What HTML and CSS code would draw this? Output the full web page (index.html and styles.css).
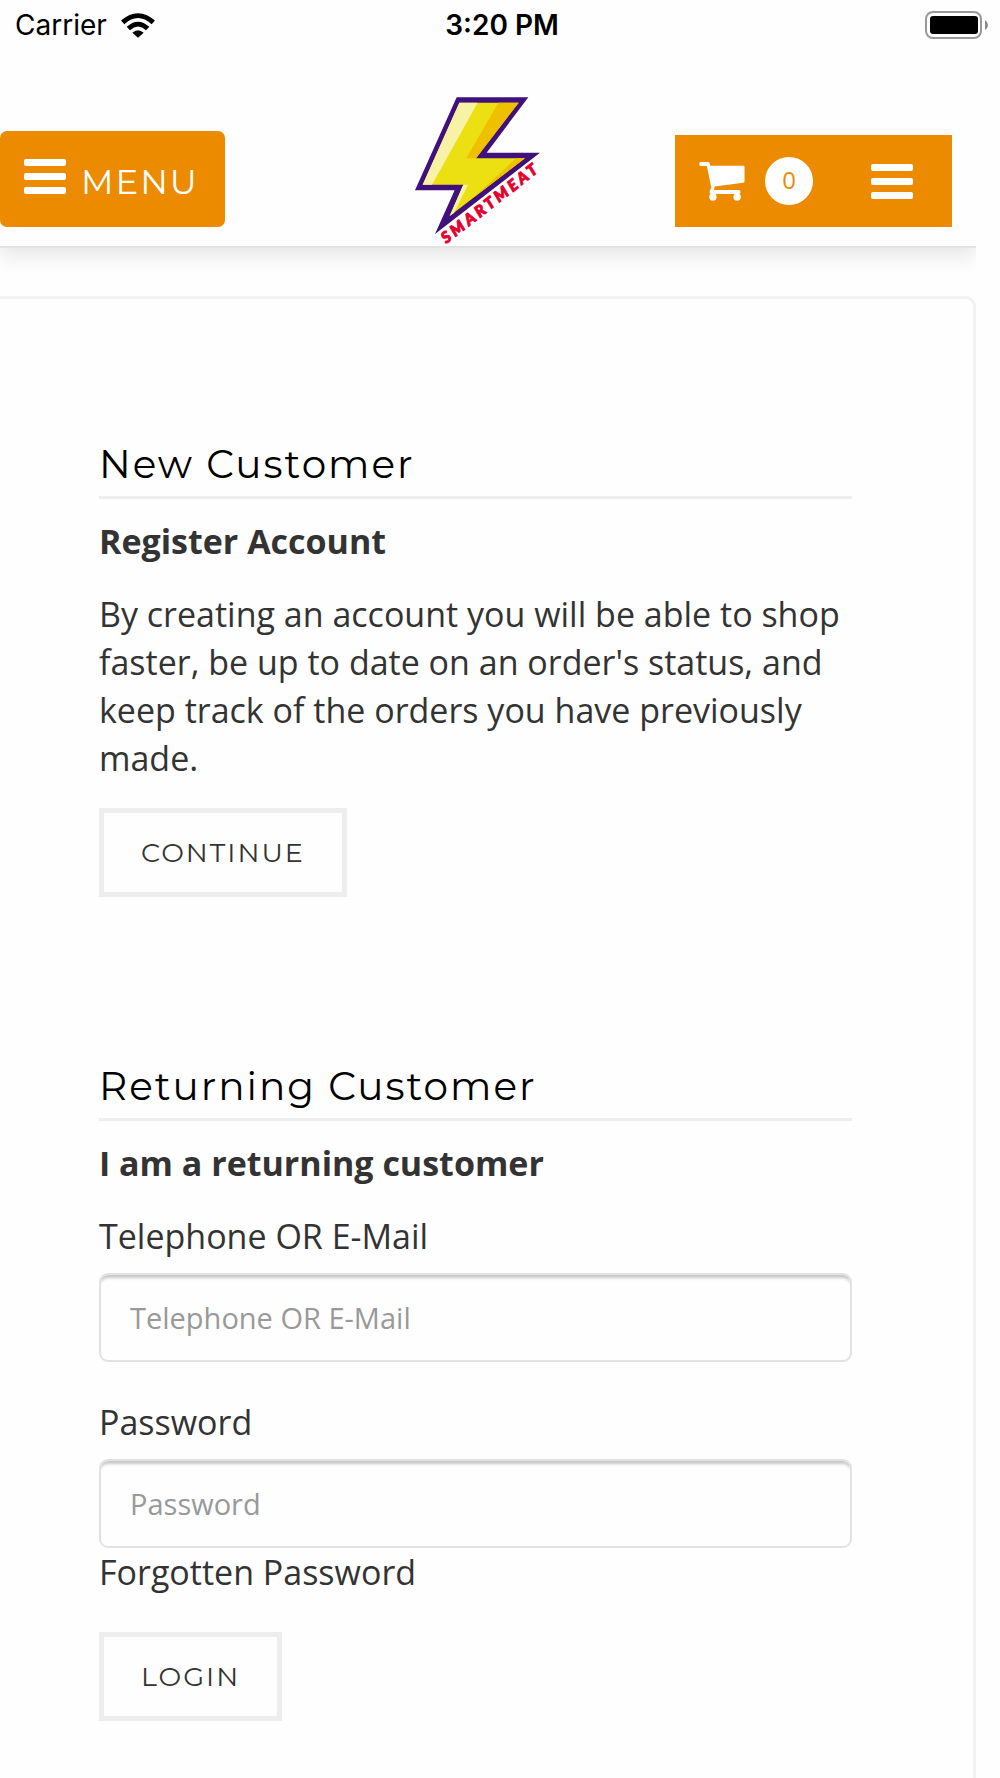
FILE: index.html
```html
<!DOCTYPE html>
<html lang="en">
<head>
<meta charset="utf-8">
<meta name="viewport" content="width=device-width, initial-scale=1">
<title>Account Login</title>
<link rel="stylesheet" href="styles.css">
</head>
<body>
<div class="status">
  <div class="status-left">
    <span>Carrier</span>
    <svg class="wifi" viewBox="0 0 102 74" aria-hidden="true">
      <path d="M0 22Q51-22 102 22L92 33Q51-4 10 33Z"/>
      <path d="M17 41Q51 10 85 41L75 51Q51 29 27 51Z"/>
      <path d="M34 59Q51 44 68 59L51 74Z"/>
    </svg>
  </div>
  <span class="time">3:20 PM</span>
  <svg class="battery" viewBox="0 0 64 28" aria-hidden="true">
    <rect x="1" y="1" width="55" height="26" rx="7" fill="none" stroke="#999" stroke-width="2"/>
    <rect x="5" y="5" width="48" height="18" rx="3"/>
    <path d="M60 9Q63 11 63 14T60 19Z" fill="#888"/>
  </svg>
</div>
<header class="header">
  <button class="menu" type="button">
    <svg class="bars" viewBox="0 0 42 35" aria-hidden="true"><rect width="42" height="7" rx="2"/><rect y="14" width="42" height="7" rx="2"/><rect y="28" width="42" height="7" rx="2"/></svg>
    <span>MENU</span>
  </button>
  <a class="logo" href="#" aria-label="Smartmeat home">
    <svg viewBox="70 290 390 450" aria-hidden="true">
      <path fill="#40107c" d="M198 294H413L288 460H448L133 704L192 573H73Z"/>
      <path fill="#ecdf12" d="M206 310H384L256 477H403L177 650L218 556H96Z"/>
      <path fill="#f8f2a6" d="M206 310H261L124 556H96ZM208 579L218 556H232L190 641L177 650Z"/>
      <path fill="#efc000" d="M323 310H384L256 477H227ZM376 477H403L250 594Z"/>
      <text class="logo-text" transform="translate(167 734) rotate(-38)">SMARTMEAT</text>
    </svg>
  </a>
  <div class="tools">
    <button class="cart" type="button" aria-label="Cart, 0 items">
      <svg class="cart-icon" viewBox="0 0 136 116" aria-hidden="true">
        <path d="M5 0H27Q31 0 32 6L33 11H131Q135 11 135 15V57Q135 61 131 62L46 73L44 83H118Q123 83 123 89T118 95H35Q30 95 31 88L36 76L23 12H5Q0 12 0 6T5 0Z"/>
        <circle cx="41" cy="104" r="11"/><circle cx="113" cy="104" r="11"/>
      </svg>
      <span class="count">0</span>
    </button>
    <button class="toggle" type="button" aria-label="Open links">
      <svg class="bars" viewBox="0 0 42 35" aria-hidden="true"><rect width="42" height="7" rx="2"/><rect y="14" width="42" height="7" rx="2"/><rect y="28" width="42" height="7" rx="2"/></svg>
    </button>
  </div>
</header>
<main class="card">
  <section>
    <h2>New Customer</h2>
    <p class="lead">Register Account</p>
    <p>By creating an account you will be able to shop faster, be up to date on an order's status, and keep track of the orders you have previously made.</p>
    <button class="btn" type="button">CONTINUE</button>
  </section>
  <section>
    <h2>Returning Customer</h2>
    <p class="lead">I am a returning customer</p>
    <form>
      <div class="field">
        <label for="login">Telephone OR E-Mail</label>
        <input id="login" type="text" placeholder="Telephone OR E-Mail">
      </div>
      <div class="field">
        <label for="password">Password</label>
        <input id="password" type="password" placeholder="Password">
        <a href="#">Forgotten Password</a>
      </div>
      <button class="btn" type="submit">LOGIN</button>
    </form>
  </section>
</main>
</body>
</html>
```
FILE: styles.css
```css
* {
  box-sizing: border-box;
}

body {
  margin: 0;
  background: #fefefe;
  color: #333;
  font: 34px/48px "Open Sans", "Noto Sans", sans-serif;
}

button {
  border: 0;
  font-family: Montserrat, Inter, sans-serif;
  cursor: pointer;
}

svg {
  display: block;
}

.status {
  display: grid;
  grid-template-columns: 1fr auto 1fr;
  align-items: center;
  height: 48px;
  padding: 1px 11px 0 15px;
  color: #000;
  font: 28px/48px Inter, sans-serif;
}

.status-left {
  display: flex;
  align-items: center;
  gap: 14px;
}

.wifi {
  width: 34px;
  height: 25px;
}

.time {
  font-weight: 600;
}

.battery {
  width: 64px;
  height: 28px;
  justify-self: end;
}

.header {
  display: grid;
  grid-template-columns: 1fr auto 1fr;
  align-items: end;
  height: 200px;
  margin-right: 24px;
  padding-right: 24px;
  border-bottom: 2px solid #e2e2e2;
  background: #fefefe;
  box-shadow: 0 8px 18px #e6e6e6;
  clip-path: inset(0 0 -40px 0);
}

.menu {
  display: flex;
  justify-self: start;
  gap: 15px;
  height: 96px;
  margin-bottom: 19px;
  padding: 28px 26px 0 24px;
  border-radius: 7px;
  background: #ec8b00;
  color: #fff;
  font-size: 34px;
  font-weight: 400;
  line-height: 46px;
  letter-spacing: 2px;
}

.bars {
  width: 42px;
  height: 35px;
  fill: #fff;
}

.logo {
  padding-left: 5px;
}

.logo svg {
  width: 130px;
  height: 150px;
}

.logo-text {
  fill: #e4002f;
  stroke: #e4002f;
  stroke-width: 3px;
  font: 900 italic 47px Lato, sans-serif;
  letter-spacing: 10px;
}

.tools {
  display: flex;
  justify-self: end;
  align-items: center;
  gap: 58px;
  height: 92px;
  margin-bottom: 19px;
  padding: 0 39px 0 24px;
  background: #ec8b00;
}

.cart {
  display: flex;
  align-items: center;
  gap: 20px;
  padding: 0;
  background: none;
}

.cart-icon {
  width: 46px;
  height: 39px;
  fill: #fff;
}

.count {
  width: 48px;
  height: 48px;
  border-radius: 50%;
  background: #fefefe;
  color: #ec8b00;
  font: 24px/46px "Open Sans", sans-serif;
}

.toggle {
  padding: 0;
  background: none;
}

.card {
  margin: 48px 24px 0 0;
  padding: 143px 121px 80px 99px;
  border: 3px solid #f2f2f2;
  border-left: 0;
  border-radius: 0 10px 0 0;
}

section + section {
  margin-top: 167px;
}

h2 {
  margin: 0 0 18px;
  padding-bottom: 10px;
  border-bottom: 3px solid #eee;
  color: #000;
  font: 400 39px/44px Montserrat, Inter, sans-serif;
  letter-spacing: 2px;
}

p {
  margin: 0 0 25px;
}

.lead {
  font-weight: 700;
}

.btn {
  display: block;
  height: 89px;
  padding: 0 37px;
  border: 5px solid #ededed;
  background: #fefefe;
  color: #333;
  font-size: 27px;
  font-weight: 400;
  letter-spacing: 2px;
}

p + .btn {
  margin-top: 26px;
}

.field {
  margin-bottom: 36px;
}

label,
.field a {
  display: block;
}

label {
  margin-bottom: 13px;
}

.field a {
  color: #333;
  text-decoration: none;
}

input {
  display: block;
  width: 100%;
  height: 89px;
  padding: 0 29px;
  border: 2px solid #e2e2e2;
  border-radius: 9px;
  background: #fefefe;
  box-shadow: inset 0 5px 3px -2px #c8c8c8;
  color: #333;
  font: 29px "Open Sans", sans-serif;
}

input::placeholder {
  color: #999;
  opacity: 1;
}
```
